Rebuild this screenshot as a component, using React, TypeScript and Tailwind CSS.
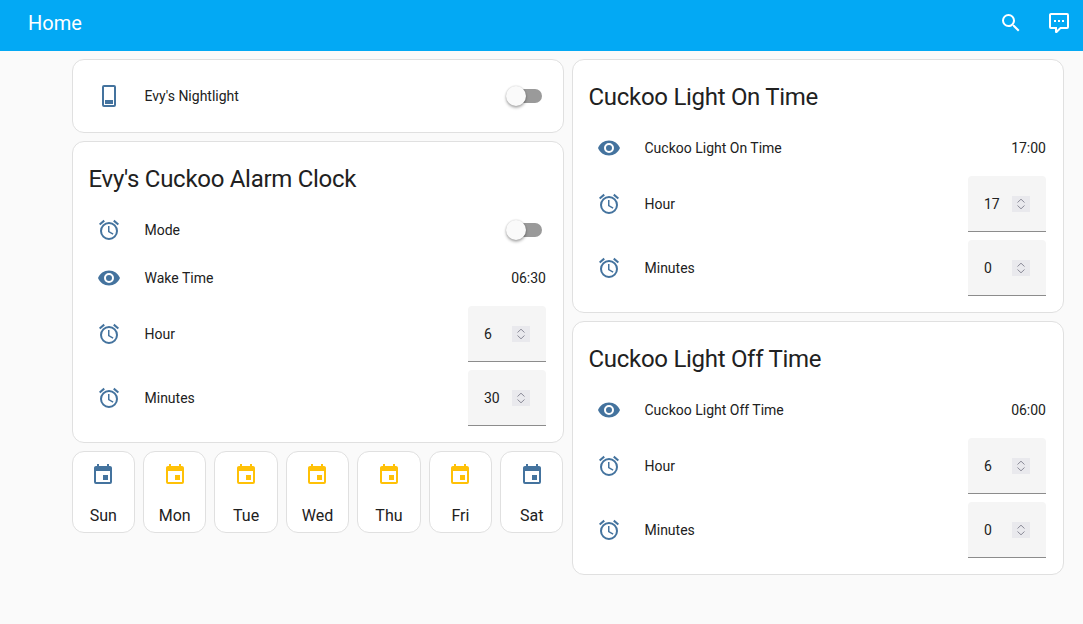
import React from "react"

const mdiAlarm = "M12,20A7,7 0 0,1 5,13A7,7 0 0,1 12,6A7,7 0 0,1 19,13A7,7 0 0,1 12,20M12,4A9,9 0 0,0 3,13A9,9 0 0,0 12,22A9,9 0 0,0 21,13A9,9 0 0,0 12,4M12.5,8H11V14L15.75,16.85L16.5,15.62L12.5,13.25V8M7.88,3.39L6.6,1.86L2,5.71L3.29,7.24L7.88,3.39M22,5.72L17.4,1.86L16.11,3.39L20.71,7.25L22,5.72Z"
const mdiEye = "M12,9A3,3 0 0,0 9,12A3,3 0 0,0 12,15A3,3 0 0,0 15,12A3,3 0 0,0 12,9M12,17A5,5 0 0,1 7,12A5,5 0 0,1 12,7A5,5 0 0,1 17,12A5,5 0 0,1 12,17M12,4.5C7,4.5 2.73,7.61 1,12C2.73,16.39 7,19.5 12,19.5C17,19.5 21.27,16.39 23,12C21.27,7.61 17,4.5 12,4.5Z"
const mdiMagnify = "M9.5,3A6.5,6.5 0 0,1 16,9.5C16,11.11 15.41,12.59 14.44,13.73L14.71,14H15.5L20.5,19L19,20.5L14,15.5V14.71L13.73,14.44C12.59,15.41 11.11,16 9.5,16A6.5,6.5 0 0,1 3,9.5A6.5,6.5 0 0,1 9.5,3M9.5,5C7,5 5,7 5,9.5C5,12 7,14 9.5,14C12,14 14,12 14,9.5C14,7 12,5 9.5,5Z"
const mdiComment = "M9,22A1,1 0 0,1 8,21V18H4A2,2 0 0,1 2,16V4C2,2.89 2.9,2 4,2H20A2,2 0 0,1 22,4V16A2,2 0 0,1 20,18H13.9L10.2,21.71C10,21.9 9.75,22 9.5,22V22H9M10,16V19.08L13.08,16H20V4H4V16H10M17,11H15V9H17V11M13,11H11V9H13V11M9,11H7V9H9V11Z"
const mdiCalendar = "M19,19H5V8H19M16,1V3H8V1H6V3H5C3.89,3 3,3.89 3,5V19A2,2 0 0,0 5,21H19A2,2 0 0,0 21,19V5C21,3.89 20.1,3 19,3H18V1M17,12H12V17H17V12Z"
const mdiDevice = "M7,1H17A2,2 0 0,1 19,3V21A2,2 0 0,1 17,23H7A2,2 0 0,1 5,21V3A2,2 0 0,1 7,1M7,3V21H17V3H7M8,16H16V20H8V16Z"

const days = [
    { label: "Sun", on: false },
    { label: "Mon", on: true },
    { label: "Tue", on: true },
    { label: "Wed", on: true },
    { label: "Thu", on: true },
    { label: "Fri", on: true },
    { label: "Sat", on: false },
]

function Icon({ path, className }: { path: string; className?: string }) {
    return (
        <svg viewBox="0 0 24 24" className={`h-6 w-6 shrink-0 fill-current ${className ?? ""}`}>
            <path d={path} />
        </svg>
    )
}

function Card({ title, children }: { title?: string; children: React.ReactNode }) {
    return (
        <div className="rounded-xl border border-[#e0e0e0] bg-white">
            {title && <h1 className="h-[68px] px-4 pt-[17px] text-2xl leading-10 tracking-[-0.29px] text-[#212121]">{title}</h1>}
            <div className={`flex flex-col gap-2 pr-[16.5px] pb-4 pl-4 ${title ? "" : "pt-4"}`}>{children}</div>
        </div>
    )
}

function Row({ icon, label, children }: { icon: string; label: string; children?: React.ReactNode }) {
    return (
        <div className="flex min-h-10 items-center text-sm text-[#212121]">
            <div className="flex w-10 justify-center text-[#44739e]">
                <Icon path={icon} />
            </div>
            <span className="ml-4 flex-1">{label}</span>
            {children}
        </div>
    )
}

function Toggle() {
    return (
        <div className="relative mr-1 h-3.5 w-8 rounded-full bg-[#9a9a9a]">
            <div className="absolute top-[-3px] left-[-4px] h-5 w-5 rounded-full bg-[#fafafa] shadow-[0_2px_3px_rgba(0,0,0,0.3),0_0_2px_rgba(0,0,0,0.2)]" />
        </div>
    )
}

function NumberBox({ value }: { value: number }) {
    return (
        <div className="flex h-14 w-[78px] items-center justify-between rounded-t border-b border-[#8c8c8c] bg-[#f5f5f5] px-4 text-sm text-[#212121]">
            <span>{value}</span>
            <svg viewBox="0 0 18 16" className="h-4 w-[18px] bg-[#e9e9ed] fill-none stroke-[#8b8b98]">
                <path d="M5.5 6.5L9 3.2L12.5 6.5M5.5 9.5L9 12.8L12.5 9.5" />
            </svg>
        </div>
    )
}

function TimeCard({ title, label, time, hour, minutes }: { title: string; label: string; time: string; hour: number; minutes: number }) {
    return (
        <Card title={title}>
            <Row icon={mdiEye} label={label}>
                <span>{time}</span>
            </Row>
            <Row icon={mdiAlarm} label="Hour">
                <NumberBox value={hour} />
            </Row>
            <Row icon={mdiAlarm} label="Minutes">
                <NumberBox value={minutes} />
            </Row>
        </Card>
    )
}

export default function App() {
    return (
        <div className="min-h-screen bg-[#fafafa] font-['Roboto',sans-serif]">
            <header className="flex h-[51px] items-center bg-[#03a9f4] pr-3 pb-[5px] pl-7 text-white">
                <span className="flex-1 text-xl">Home</span>
                <Icon path={mdiMagnify} />
                <Icon path={mdiComment} className="ml-6" />
            </header>

            <main className="flex gap-2 pt-2 pr-[19.5px] pl-[71.5px]">
                <div className="flex flex-1 flex-col gap-2">
                    <Card>
                        <Row icon={mdiDevice} label="Evy's Nightlight">
                            <Toggle />
                        </Row>
                    </Card>
                    <Card title="Evy's Cuckoo Alarm Clock">
                        <Row icon={mdiAlarm} label="Mode">
                            <Toggle />
                        </Row>
                        <Row icon={mdiEye} label="Wake Time">
                            <span>06:30</span>
                        </Row>
                        <Row icon={mdiAlarm} label="Hour">
                            <NumberBox value={6} />
                        </Row>
                        <Row icon={mdiAlarm} label="Minutes">
                            <NumberBox value={30} />
                        </Row>
                    </Card>
                    <div className="grid grid-cols-7 gap-2">
                        {days.map((day) => (
                            <div key={day.label} className="flex h-[82px] flex-col items-center rounded-xl border border-[#e0e0e0] bg-white pt-[11px]">
                                <Icon path={mdiCalendar} className={day.on ? "text-[#ffc107]" : "text-[#44739e]"} />
                                <span className="mt-[17px] text-base leading-6 text-[#212121]">{day.label}</span>
                            </div>
                        ))}
                    </div>
                </div>

                <div className="flex flex-1 flex-col gap-2">
                    <TimeCard title="Cuckoo Light On Time" label="Cuckoo Light On Time" time="17:00" hour={17} minutes={0} />
                    <TimeCard title="Cuckoo Light Off Time" label="Cuckoo Light Off Time" time="06:00" hour={6} minutes={0} />
                </div>
            </main>
        </div>
    )
}
